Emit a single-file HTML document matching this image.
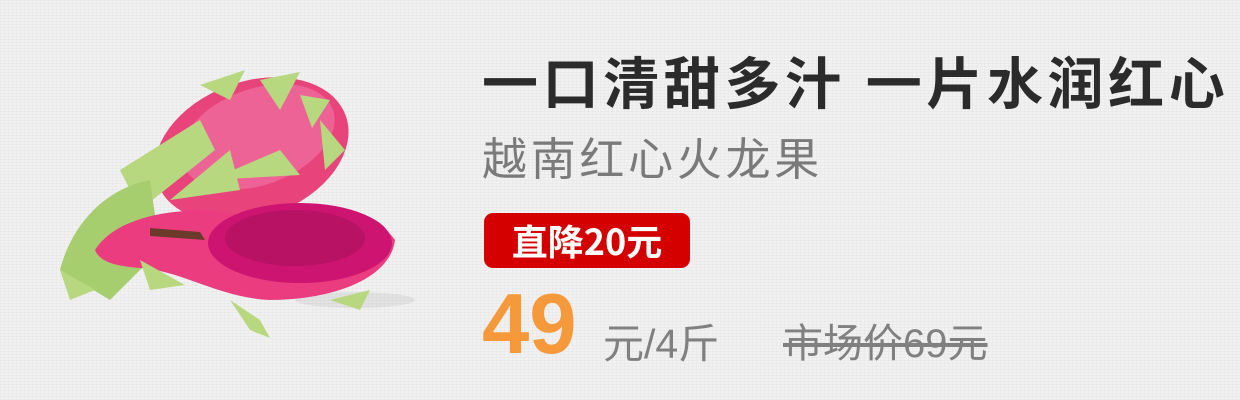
<!DOCTYPE html>
<html><head><meta charset="utf-8"><style>
html,body{margin:0;padding:0}
body{width:1240px;height:400px;overflow:hidden;background:#f1f1f1;position:relative;font-family:"Liberation Sans","Noto Sans CJK SC",sans-serif;
background-image:repeating-linear-gradient(0deg,rgba(0,0,0,0.025) 0 1px,transparent 1px 3px),repeating-linear-gradient(90deg,rgba(0,0,0,0.02) 0 1px,transparent 1px 4px);}
.t{position:absolute;white-space:nowrap}
#title{left:482px;top:50px;font-size:56px;font-weight:bold;color:#2b2b2b;letter-spacing:4.6px;line-height:70px}
#sub{left:482px;top:130px;font-size:45px;color:#7a7a7a;letter-spacing:3.7px;line-height:60px}
#badge{position:absolute;left:484px;top:213px;width:206px;height:55px;background:#d40000;border-radius:9px;color:#fff;font-size:36px;font-weight:bold;text-align:center;line-height:55px;font-family:"Noto Sans CJK SC","Liberation Sans",sans-serif}
#p{left:482px;top:280px;font-size:85px;font-weight:bold;color:#f5993a;line-height:90px}
#u{left:603px;top:316px;font-size:41px;color:#808080;line-height:56px}
#m{left:783px;top:316px;font-size:40px;color:#808080;line-height:56px;text-decoration:line-through}
</style></head><body>
<svg width="420" height="380" style="position:absolute;left:0;top:0" viewBox="0 0 420 380">
<ellipse cx="355" cy="300" rx="60" ry="8" fill="#000" opacity="0.06"/>
<g transform="rotate(-20 250 145)"><ellipse cx="250" cy="150" rx="100" ry="68" fill="#e8437a"/><ellipse cx="260" cy="140" rx="80" ry="48" fill="#f07aa6" opacity="0.6"/></g>
<path d="M200 85 L245 70 L230 100 Z M260 80 L300 72 L280 110 Z M300 95 L330 100 L312 128 Z M170 200 L230 150 L240 190 Z M210 180 L280 150 L300 175 Z M120 170 L200 120 L215 150 L140 210 Z M320 120 L345 150 L325 170 Z" fill="#b7d87f"/>
<path d="M60 270 C70 230 100 190 150 180 L160 250 L110 300 Z" fill="#a7ce6e"/>
<path d="M95 250 C120 210 200 205 240 215 C300 195 370 205 395 240 C390 280 330 300 270 300 C220 298 180 270 140 268 C115 266 100 262 95 250 Z" fill="#ea3c7e"/>
<ellipse cx="300" cy="243" rx="92" ry="40" fill="#cc1470"/>
<ellipse cx="295" cy="238" rx="70" ry="28" fill="#a8105a" opacity="0.6"/>
<path d="M150 228 L200 232 L205 240 L150 236 Z" fill="#6b3a2a"/>
<path d="M230 300 L260 320 L270 338 L250 330 Z M330 300 L370 290 L360 310 Z M60 270 L95 290 L70 300 Z M140 260 L185 285 L150 290 Z" fill="#b7d87f"/>
</svg>
<div class="t" id="title">一口清甜多汁 一片水润红心</div>
<div class="t" id="sub">越南红心火龙果</div>
<div id="badge">直降20元</div>
<div class="t" id="p">49</div>
<div class="t" id="u">元/4斤</div>
<div class="t" id="m">市场价69元</div>
</body></html>
